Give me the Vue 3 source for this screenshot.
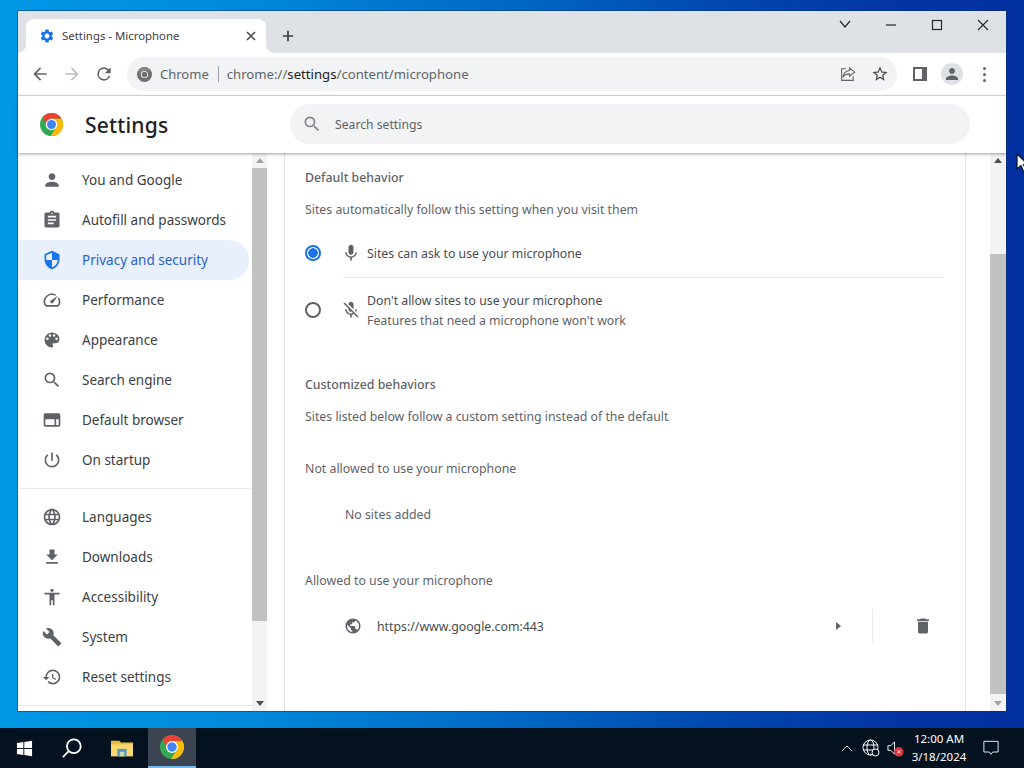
<template>
  <div class="screen">
    <div class="desktop">
      <div class="window">
        <div class="tabstrip">
          <div class="tab">
            <svg class="fav" viewBox="0 0 24 24"><path :d="icons.gear" /></svg>
            <span class="tab-title">Settings - Microphone</span>
            <svg class="tab-close" viewBox="0 0 12 12"><path d="M2 2l8 8M10 2l-8 8" /></svg>
          </div>
          <svg class="new-tab" viewBox="0 0 14 14"><path d="M7 1v12M1 7h12" /></svg>
          <div class="win-controls">
            <svg class="ctl" viewBox="0 0 46 28"><path d="M18 10l5 6 5-6" /></svg>
            <svg class="ctl" viewBox="0 0 46 28"><path d="M18 14h10" /></svg>
            <svg class="ctl" viewBox="0 0 46 28"><rect x="18.5" y="9.5" width="9" height="9" /></svg>
            <svg class="ctl" viewBox="0 0 46 28"><path d="M18 9l10 10M28 9l-10 10" /></svg>
          </div>
        </div>

        <div class="toolbar">
          <svg class="tb-btn" viewBox="0 0 24 24"><path d="M20 11H7.8l5.6-5.6L12 4l-8 8 8 8 1.4-1.4L7.8 13H20z" /></svg>
          <svg class="tb-btn faded" viewBox="0 0 24 24"><path d="M4 11h12.2l-5.6-5.6L12 4l8 8-8 8-1.4-1.4 5.6-5.6H4z" /></svg>
          <svg class="tb-btn" viewBox="0 0 24 24"><path d="M17.65 6.35A7.96 7.96 0 0 0 12 4a8 8 0 1 0 7.73 10h-2.08A6 6 0 1 1 12 6c1.66 0 3.14.69 4.22 1.78L13 11h7V4l-2.35 2.35z" /></svg>
          <div class="omnibox">
            <svg class="chip-logo" viewBox="0 0 48 48">
              <circle cx="24" cy="24" r="24" fill="#6e7174" />
              <path d="M6.3 7.8A24 24 0 0 1 44.8 12H24L14 30z" fill="#85888b" />
              <circle cx="24" cy="24" r="11.5" fill="#f1f3f4" />
              <circle cx="24" cy="24" r="8.5" fill="#6e7174" />
            </svg>
            <span class="chip">Chrome</span>
            <span class="chip-sep"></span>
            <span class="url">chrome://<b>settings</b>/content/microphone</span>
            <svg class="omni-icon share" viewBox="0 0 24 24">
              <path d="M14 4l7 5.5-7 5.5v-3.2c-4.2 0-7 1.4-9 4.7.6-4.8 3.4-8.6 9-9.3z" />
              <path d="M9 5H3.500v15.500H19V15" />
            </svg>
            <svg class="omni-icon star" viewBox="0 0 24 24"><path d="M22 9.240l-7.190-.62L12 2 9.190 8.630 2 9.240l5.460 4.730L5.820 21 12 17.270 18.180 21l-1.630-7.030L22 9.240zM12 15.400l-3.760 2.270 1-4.280-3.320-2.880 4.380-.38L12 6.100l1.710 4.040 4.380.38-3.320 2.880 1 4.280L12 15.400z" /></svg>
          </div>
          <div class="panel-btn"><span></span></div>
          <div class="avatar">
            <svg viewBox="0 0 24 24"><path :d="icons.person" /></svg>
          </div>
          <div class="dots"><i></i><i></i><i></i></div>
        </div>

        <header class="settings-head">
          <svg class="head-logo" viewBox="0 0 48 48">
            <circle cx="24" cy="24" r="24" fill="#34a853" />
            <path d="M6.300 7.800A24 24 0 0 1 44.800 12H24L14 30z" fill="#ea4335" />
            <path d="M44.800 12A24 24 0 0 1 22 47.900L34 30 24 12z" fill="#fbbc04" />
            <circle cx="24" cy="24" r="12" fill="#fff" />
            <circle cx="24" cy="24" r="9.500" fill="#4285f4" />
          </svg>
          <h1 class="head-title">Settings</h1>
          <div class="search">
            <svg viewBox="0 0 24 24"><path :d="icons.search" /></svg>
            <span>Search settings</span>
          </div>
        </header>

        <div class="body">
          <nav class="nav">
            <template v-for="group in navGroups" :key="group[0].label">
              <a v-for="item in group" :key="item.label" class="nav-item" :class="{ active: item.active }">
                <svg viewBox="0 0 24 24"><path :d="item.icon" fill-rule="evenodd" /></svg>
                <span>{{ item.label }}</span>
              </a>
              <div class="nav-sep"></div>
            </template>
          </nav>
          <div class="scrollbar small">
            <i class="arrow up"></i>
            <div class="thumb"></div>
            <i class="arrow down"></i>
          </div>

          <main class="card">
            <h2 class="heading">Default behavior</h2>
            <p class="sub">Sites automatically follow this setting when you visit them</p>

            <div class="radio-row first">
              <span class="radio on"></span>
              <svg class="radio-icon" viewBox="0 0 24 24"><path :d="icons.mic" /></svg>
              <div class="radio-text">Sites can ask to use your microphone</div>
            </div>
            <div class="radio-line"></div>
            <div class="radio-row second">
              <span class="radio"></span>
              <svg class="radio-icon" viewBox="0 0 24 24"><path :d="icons.micOff" /></svg>
              <div class="radio-text">
                Don't allow sites to use your microphone
                <div class="secondary">Features that need a microphone won't work</div>
              </div>
            </div>

            <h2 class="heading custom">Customized behaviors</h2>
            <p class="sub">Sites listed below follow a custom setting instead of the default</p>

            <h3 class="list-title">Not allowed to use your microphone</h3>
            <div class="no-sites">No sites added</div>

            <h3 class="list-title">Allowed to use your microphone</h3>
            <div class="site-row">
              <svg class="site-globe" viewBox="0 0 24 24"><path :d="icons.globe" /></svg>
              <span class="site-url">https://www.google.com:443</span>
              <i class="site-arrow"></i>
              <span class="site-sep"></span>
              <svg class="site-trash" viewBox="0 0 24 24"><path :d="icons.trash" /></svg>
            </div>
          </main>

          <div class="scrollbar big">
            <i class="arrow up"></i>
            <div class="thumb"></div>
            <i class="arrow down"></i>
          </div>
        </div>
      </div>

      <svg class="cursor" viewBox="0 0 12 20">
        <path d="M1 1v15l4-3.500 2.500 6 2.500-1-2.500-6H12z" fill="#fff" stroke="#0a1420" stroke-width="1.200" />
      </svg>
    </div>

    <footer class="taskbar">
      <div class="task start">
        <svg viewBox="0 0 18 18"><path d="M1 3.200l6.800-1v6.300H1zM8.800 2l8.200-1.200v7.700H8.800zM1 9.500h6.800v6.300l-6.800-1zM8.800 9.500H17v7.700L8.800 16z" fill="#fff" /></svg>
      </div>
      <div class="task">
        <svg class="tb-search" viewBox="0 0 24 24"><circle cx="14" cy="10" r="7.500" /><path d="M8.500 15.500L2 22" /></svg>
      </div>
      <div class="task">
        <svg viewBox="0 0 24 20">
          <path d="M0 2h9l2 2h13v15H0z" fill="#e8b93e" />
          <path d="M0 6h24v13H0z" fill="#f9d870" />
          <path d="M7 11h10v8H7z" fill="#4f93c4" />
          <path d="M9.500 14h5v5h-5z" fill="#c9d9a8" />
        </svg>
      </div>
      <div class="task current">
        <svg viewBox="0 0 48 48">
          <circle cx="24" cy="24" r="24" fill="#34a853" />
          <path d="M6.300 7.800A24 24 0 0 1 44.800 12H24L14 30z" fill="#ea4335" />
          <path d="M44.800 12A24 24 0 0 1 22 47.900L34 30 24 12z" fill="#fbbc04" />
          <circle cx="24" cy="24" r="12" fill="#fff" />
          <circle cx="24" cy="24" r="9.500" fill="#4285f4" />
        </svg>
      </div>

      <div class="tray">
        <svg class="tray-up" viewBox="0 0 14 8"><path d="M1 7l6-6 6 6" /></svg>
        <svg class="tray-globe" viewBox="0 0 18 18">
          <circle cx="8.500" cy="8.500" r="7.500" />
          <ellipse cx="8.500" cy="8.500" rx="3.500" ry="7.500" />
          <path d="M1 6h15M1 11h15" />
          <circle class="badge" cx="13.500" cy="13.500" r="3.500" />
        </svg>
        <svg class="tray-sound" viewBox="0 0 18 18">
          <path d="M1 6h3l4-4v13l-4-4H1z" />
          <circle cx="12.500" cy="12.500" r="5" fill="#d9363e" stroke="none" />
          <path d="M10.800 10.800l3.400 3.400M14.200 10.800l-3.400 3.400" />
        </svg>
        <div class="clock">
          <div>12:00 AM</div>
          <div>3/18/2024</div>
        </div>
        <svg class="tray-note" viewBox="0 0 18 17"><path d="M1 1h16v12h-6l-2 2.500L7 13H1z" /></svg>
      </div>
    </footer>
  </div>
</template>

<script setup>
const icons = {
  gear: "M19.14 12.94c.04-.3.06-.61.06-.94 0-.32-.02-.64-.07-.94l2.03-1.58a.49.49 0 0 0 .12-.61l-1.92-3.32a.488.488 0 0 0-.59-.22l-2.39.96c-.5-.38-1.03-.7-1.62-.94l-.36-2.54a.484.484 0 0 0-.48-.41h-3.84c-.24 0-.43.17-.47.41l-.36 2.54c-.59.24-1.13.57-1.62.94l-2.39-.96c-.22-.08-.47 0-.59.22L2.74 8.87c-.12.21-.08.47.12.61l2.03 1.58c-.05.3-.09.63-.09.94s.02.64.07.94l-2.03 1.58a.49.49 0 0 0-.12.61l1.92 3.32c.12.22.37.29.59.22l2.39-.96c.5.38 1.03.7 1.62.94l.36 2.54c.05.24.24.41.48.41h3.84c.24 0 .44-.17.47-.41l.36-2.54c.59-.24 1.13-.56 1.62-.94l2.39.96c.22.08.47 0 .59-.22l1.92-3.32c.12-.22.07-.47-.12-.61l-2.01-1.58zM12 15.600c-1.98 0-3.6-1.62-3.6-3.6s1.62-3.6 3.6-3.6 3.6 1.62 3.6 3.6-1.62 3.6-3.6 3.6z",
  person: "M12 12c2.210 0 4-1.790 4-4s-1.790-4-4-4-4 1.790-4 4 1.790 4 4 4zm0 2c-2.670 0-8 1.340-8 4v2h16v-2c0-2.660-5.330-4-8-4z",
  search: "M15.500 14h-.79l-.28-.27A6.471 6.471 0 0 0 16 9.500 6.500 6.500 0 1 0 9.500 16c1.610 0 3.090-.59 4.230-1.570l.27.28v.79l5 4.990L20.490 19l-4.990-5zm-6 0C7.010 14 5 11.990 5 9.500S7.010 5 9.500 5 14 7.010 14 9.500 11.990 14 9.500 14z",
  mic: "M12 14c1.660 0 3-1.340 3-3V5c0-1.660-1.340-3-3-3S9 3.340 9 5v6c0 1.660 1.340 3 3 3zm5.300-3c0 3-2.540 5.100-5.300 5.100S6.700 14 6.700 11H5c0 3.410 2.720 6.230 6 6.720V21h2v-3.280c3.280-.48 6-3.300 6-6.720h-1.700z",
  micOff: "M19 11h-1.700c0 .74-.16 1.430-.43 2.050l1.230 1.230c.56-.98.9-2.090.9-3.280zm-4.020.17c0-.06.02-.11.02-.17V5c0-1.660-1.340-3-3-3S9 3.340 9 5v.18l5.980 5.990zM4.270 3L3 4.270l6.010 6.010V11c0 1.660 1.330 3 2.990 3 .22 0 .44-.03.65-.08l1.660 1.660c-.71.33-1.500.52-2.310.52-2.760 0-5.300-2.100-5.300-5.100H5c0 3.410 2.720 6.230 6 6.720V21h2v-3.280c.91-.13 1.770-.45 2.540-.9L19.730 21 21 19.730 4.270 3z",
  globe: "M12 2C6.480 2 2 6.480 2 12s4.480 10 10 10 10-4.480 10-10S17.520 2 12 2zm-1 17.930c-3.950-.49-7-3.850-7-7.930 0-.62.08-1.210.21-1.790L9 15v1c0 1.100.9 2 2 2v1.930zm6.900-2.540c-.26-.81-1-1.390-1.900-1.390h-1v-3c0-.55-.45-1-1-1H8v-2h2c.55 0 1-.45 1-1V7h2c1.100 0 2-.9 2-2v-.41c2.930 1.190 5 4.060 5 7.410 0 2.080-.8 3.970-2.100 5.390z",
  trash: "M6 19c0 1.100.9 2 2 2h8c1.100 0 2-.9 2-2V7H6v12zM19 4h-3.500l-1-1h-5l-1 1H5v2h14V4z",
}

const navGroups = [
  [
    { label: "You and Google", icon: icons.person },
    { label: "Autofill and passwords", icon: "M19 3h-4.180C14.400 1.840 13.300 1 12 1c-1.300 0-2.400.84-2.820 2H5c-1.100 0-2 .9-2 2v14c0 1.100.9 2 2 2h14c1.100 0 2-.9 2-2V5c0-1.100-.9-2-2-2zm-7 0c.55 0 1 .45 1 1s-.45 1-1 1-1-.45-1-1 .45-1 1-1zm2 14H7v-2h7v2zm3-4H7v-2h10v2zm0-4H7V7h10v2z" },
    { label: "Privacy and security", active: true, icon: "M12 1L3 5v6c0 5.550 3.840 10.740 9 12 5.160-1.260 9-6.450 9-12V5l-9-4zm0 10.990h7c-.53 4.120-3.280 7.790-7 8.940V12H5V6.300l7-3.110v8.800z" },
    { label: "Performance", icon: "M20.380 8.570l-1.230 1.850a8 8 0 0 1-.22 7.580H5.070A8 8 0 0 1 15.580 6.850l1.850-1.230A10 10 0 0 0 3.350 19a2 2 0 0 0 1.720 1h13.850a2 2 0 0 0 1.740-1 10 10 0 0 0-.27-10.440zm-9.790 6.840a2 2 0 0 0 2.830 0l5.660-8.490-8.490 5.660a2 2 0 0 0 0 2.830z" },
    { label: "Appearance", icon: "M12 3a9 9 0 0 0 0 18c.83 0 1.500-.67 1.500-1.500 0-.39-.15-.74-.39-1.010-.23-.26-.38-.61-.38-.99 0-.83.67-1.500 1.500-1.500H16c2.760 0 5-2.240 5-5 0-4.420-4.030-8-9-8zm-5.500 9a1.500 1.500 0 1 1 0-3 1.500 1.500 0 0 1 0 3zm3-4a1.500 1.500 0 1 1 0-3 1.500 1.500 0 0 1 0 3zm5 0a1.500 1.500 0 1 1 0-3 1.500 1.500 0 0 1 0 3zm3 4a1.500 1.500 0 1 1 0-3 1.500 1.500 0 0 1 0 3z" },
    { label: "Search engine", icon: icons.search },
    { label: "Default browser", icon: "M4 4h16a2 2 0 0 1 2 2v12a2 2 0 0 1-2 2H4a2 2 0 0 1-2-2V6a2 2 0 0 1 2-2zm0 7v7h11v-7H4zm13 0v7h3v-7h-3z" },
    { label: "On startup", icon: "M13 3h-2v10h2V3zm4.830 2.170l-1.420 1.420A6.920 6.920 0 0 1 19 12c0 3.870-3.130 7-7 7A6.995 6.995 0 0 1 7.580 6.580L6.170 5.170A8.932 8.932 0 0 0 3 12a9 9 0 0 0 18 0c0-2.740-1.230-5.180-3.170-6.830z" },
  ],
  [
    { label: "Languages", icon: "M11.990 2C6.470 2 2 6.480 2 12s4.470 10 9.990 10C17.520 22 22 17.520 22 12S17.520 2 11.990 2zm6.930 6h-2.950a15.650 15.650 0 0 0-1.380-3.560A8.030 8.030 0 0 1 18.920 8zM12 4.040c.83 1.200 1.480 2.530 1.910 3.960h-3.820c.43-1.430 1.080-2.760 1.910-3.960zM4.260 14C4.100 13.360 4 12.690 4 12s.1-1.360.26-2h3.380c-.08.66-.14 1.320-.14 2s.06 1.340.14 2H4.260zm.82 2h2.950c.32 1.250.78 2.450 1.380 3.560A7.987 7.987 0 0 1 5.080 16zm2.950-8H5.080a7.987 7.987 0 0 1 4.330-3.560A15.650 15.650 0 0 0 8.030 8zM12 19.960c-.83-1.200-1.480-2.530-1.910-3.960h3.820c-.43 1.430-1.080 2.760-1.910 3.960zM14.340 14H9.660c-.09-.66-.16-1.320-.16-2s.07-1.350.16-2h4.680c.09.65.16 1.320.16 2s-.07 1.340-.16 2zm.25 5.560c.6-1.110 1.060-2.310 1.380-3.560h2.950a8.030 8.030 0 0 1-4.330 3.560zM16.360 14c.08-.66.14-1.320.14-2s-.06-1.340-.14-2h3.380c.16.64.26 1.310.26 2s-.1 1.360-.26 2h-3.380z" },
    { label: "Downloads", icon: "M19 9h-4V3H9v6H5l7 7 7-7zM5 18v2h14v-2H5z" },
    { label: "Accessibility", icon: "M12 2c1.100 0 2 .9 2 2s-.9 2-2 2-2-.9-2-2 .9-2 2-2zm9 7h-6v13h-2v-6h-2v6H9V9H3V7h18v2z" },
    { label: "System", icon: "M22.700 19l-9.100-9.100c.9-2.300.4-5-1.500-6.900-2-2-5-2.400-7.400-1.300L9 6 6 9 1.600 4.700C.4 7.100.9 10.100 2.900 12.100c1.900 1.900 4.600 2.400 6.900 1.500l9.100 9.100c.4.4 1 .4 1.400 0l2.300-2.300c.5-.4.5-1.100.1-1.400z" },
    { label: "Reset settings", icon: "M13 3a9 9 0 0 0-9 9H1l3.890 3.890.07.14L9 12H6c0-3.870 3.130-7 7-7s7 3.130 7 7-3.130 7-7 7c-1.930 0-3.680-.79-4.940-2.060l-1.420 1.420A8.954 8.954 0 0 0 13 21a9 9 0 0 0 0-18zm-1 5v5l4.280 2.540.72-1.210-3.500-2.080V8H12z" },
  ],
]
</script>

<style>
html,
body {
  margin: 0;
  overflow: hidden;
}
</style>

<style scoped>
.screen {
  width: 1024px;
  height: 768px;
  display: flex;
  flex-direction: column;
  overflow: hidden;
  font-family: "Noto Sans", "Open Sans", sans-serif;
  font-size: 13px;
  color: #202124;
}

.desktop {
  position: relative;
  height: 728px;
  padding: 11px 18px 0;
  box-sizing: border-box;
  background: linear-gradient(90deg, #0098e6 0%, #0088da 25%, #0068c4 50%, #0048b0 70%, #0434a4 88%, #0230a0 100%);
}

.window {
  width: 988px;
  height: 700px;
  display: flex;
  flex-direction: column;
  background: #fff;
  box-shadow: 0 0 0 1px rgba(10, 50, 100, 0.5);
}

.tabstrip {
  height: 42px;
  flex: none;
  display: flex;
  background: #dee1e6;
}

.tab {
  position: relative;
  margin: 8px 0 0 8px;
  width: 240px;
  height: 34px;
  display: flex;
  align-items: center;
  box-sizing: border-box;
  padding: 0 9px 0 13px;
  background: #fff;
  border-radius: 8px 8px 0 0;
}

.tab::before,
.tab::after {
  content: "";
  position: absolute;
  bottom: 0;
  width: 8px;
  height: 8px;
}

.tab::before {
  left: -8px;
  background: radial-gradient(circle at 0 0, #dee1e6 7.5px, #fff 8px);
}

.tab::after {
  right: -8px;
  background: radial-gradient(circle at 100% 0, #dee1e6 7.5px, #fff 8px);
}

.fav {
  width: 16px;
  height: 16px;
  fill: #1a73e8;
}

.tab-title {
  flex: 1;
  margin: 0 0 2px 7px;
  font-size: 11.400px;
  color: #3c4043;
}

.tab-close {
  width: 12px;
  height: 12px;
  fill: none;
  stroke: #45484c;
  stroke-width: 1.6;
}

.new-tab {
  width: 12px;
  height: 12px;
  margin: 19px 0 0 16px;
  fill: none;
  stroke: #3c4043;
  stroke-width: 2;
}

.win-controls {
  margin-left: auto;
  display: flex;
  height: 28px;
}

.ctl {
  width: 46px;
  height: 28px;
  fill: none;
  stroke: #26282b;
  stroke-width: 1.200;
}

.toolbar {
  height: 42px;
  flex: none;
  display: flex;
  align-items: center;
  box-sizing: content-box;
  padding-left: 12px;
  border-bottom: 1px solid #dadce0;
}

.tb-btn {
  width: 20px;
  height: 20px;
  margin-right: 12px;
  fill: #5f6368;
}

.tb-btn.faded {
  fill: #bcc0c4;
}

.omnibox {
  width: 770px;
  height: 34px;
  margin-left: 1px;
  display: flex;
  align-items: center;
  box-sizing: border-box;
  padding-left: 10px;
  background: #f1f3f4;
  border-radius: 17px;
}

.chip-logo {
  width: 15px;
  height: 15px;
}

.chip {
  margin-left: 8px;
  color: #5f6368;
}

.chip-sep {
  width: 1px;
  height: 16px;
  margin: 0 8px 0 9px;
  background: #9aa0a6;
}

.url {
  font-size: 13.170px;
  color: #5f6368;
}

.url b {
  font-weight: 400;
  color: #202124;
}

.omni-icon {
  width: 18px;
  height: 18px;
}

.share {
  margin-left: auto;
  fill: none;
  stroke: #5f6368;
  stroke-width: 1.400;
}

.star {
  margin: 0 8px 0 14px;
  fill: #45484c;
}

.panel-btn {
  width: 14px;
  height: 14px;
  margin-left: 16px;
  box-sizing: border-box;
  border: 2px solid #5f6368;
  border-right-width: 5px;
  background: #fff;
}

.avatar {
  width: 22px;
  height: 22px;
  margin-left: 14px;
  display: flex;
  align-items: center;
  justify-content: center;
  background: #dee1e6;
  border-radius: 50%;
}

.avatar svg {
  width: 18px;
  height: 18px;
  fill: #5f6368;
}

.dots {
  margin-left: 20px;
  display: flex;
  flex-direction: column;
  gap: 3px;
}

.dots i {
  width: 3px;
  height: 3px;
  background: #5f6368;
  border-radius: 50%;
}

.settings-head {
  position: relative;
  z-index: 2;
  height: 57px;
  flex: none;
  display: flex;
  align-items: center;
  box-sizing: border-box;
  padding: 0 36px 1px 22px;
  background: #fff;
  box-shadow: 0 1px 3px rgba(60, 64, 67, 0.5);
}

.head-logo {
  width: 23px;
  height: 23px;
}

.head-title {
  width: 205px;
  margin: 2px 0 0 22px;
  font-size: 21px;
  font-weight: 500;
  letter-spacing: 0.2px;
}

.search {
  flex: 1;
  height: 40px;
  display: flex;
  align-items: center;
  box-sizing: border-box;
  padding-left: 12px;
  background: #f1f3f4;
  border-radius: 20px;
  color: #5f6368;
  font-size: 12.200px;
}

.search svg {
  width: 20px;
  height: 20px;
  fill: #80868b;
  margin-right: 13px;
}

.body {
  flex: 1;
  min-height: 0;
  display: flex;
  overflow: hidden;
}

.nav {
  width: 234px;
  flex: none;
  padding-top: 7px;
  box-sizing: border-box;
  font-size: 13.500px;
  color: #3c4043;
}

.nav-item {
  width: 231px;
  height: 40px;
  display: flex;
  align-items: center;
  box-sizing: border-box;
  padding-left: 24px;
  border-radius: 0 20px 20px 0;
}

.nav-item svg {
  width: 20px;
  height: 20px;
  margin-right: 20px;
  fill: #5f6368;
  flex: none;
}

.nav-item.active {
  background: #e8f0fe;
  color: #2a62c8;
}

.nav-item.active svg {
  fill: #1a73e8;
}

.nav-sep {
  margin: 8px 0;
  border-top: 1px solid #e8eaed;
}

.scrollbar {
  flex: none;
  display: flex;
  flex-direction: column;
  align-items: center;
  background: #f3f3f3;
  position: relative;
  box-sizing: border-box;
}

.scrollbar.small {
  width: 15px;
}

.scrollbar.big {
  width: 16px;
  margin-left: 24px;
}

.thumb {
  width: 100%;
  background: #c1c1c1;
}

.small .thumb {
  height: 453px;
  margin-top: 5px;
}

.big .thumb {
  height: 440px;
  margin-top: 91px;
}

.arrow {
  width: 0;
  height: 0;
  border-left: 4px solid transparent;
  border-right: 4px solid transparent;
}

.arrow.up {
  margin-top: 5px;
  border-bottom: 5px solid #505050;
}

.arrow.down {
  margin-top: auto;
  margin-bottom: 5px;
  border-top: 5px solid #505050;
}

.small .arrow.up,
.big .arrow.down {
  border-top-color: #a3a3a3;
  border-bottom-color: #a3a3a3;
}

.card {
  width: 682px;
  margin-left: 17px;
  box-sizing: border-box;
  flex: none;
  padding-left: 20px;
  border-left: 1px solid #e3e3e3;
  border-right: 1px solid #e3e3e3;
  color: #484b50;
  font-size: 12.300px;
}

.heading,
.list-title {
  height: 48px;
  margin: 0;
  font-size: 12.350px;
  line-height: 50px;
  color: #5f6368;
}

.heading {
  font-weight: 500;
}

.heading.custom {
  margin-top: 18px;
}

.list-title {
  margin-top: 20px;
  font-weight: 400;
}

.sub {
  height: 16px;
  margin: 0;
  line-height: 18px;
  color: #5f6368;
}

.radio-row {
  display: flex;
  align-items: center;
}

.radio-row.first {
  margin-top: 12px;
  height: 48px;
}

.radio-row.second {
  height: 64px;
}

.radio {
  width: 16px;
  height: 16px;
  box-sizing: border-box;
  border: 2px solid #5f6368;
  border-radius: 50%;
  flex: none;
}

.radio.on {
  border-color: #1a73e8;
  background: radial-gradient(circle, #1a73e8 4.500px, #fff 5px);
}

.radio-icon {
  width: 20px;
  height: 20px;
  margin: 0 6px 0 20px;
  fill: #5f6368;
  flex: none;
}

.radio-text {
  padding-top: 2px;
  line-height: 20px;
}

.secondary {
  color: #5f6368;
}

.radio-line {
  width: 601px;
  margin-left: 38px;
  border-top: 1px solid #e8eaed;
}

.no-sites {
  height: 44px;
  padding-left: 40px;
  line-height: 46px;
  color: #5f6368;
}

.site-row {
  height: 44px;
  display: flex;
  align-items: center;
}

.site-globe {
  width: 18px;
  height: 18px;
  margin-left: 39px;
  fill: #5f6368;
}

.site-url {
  margin-left: 15px;
}

.site-arrow {
  width: 0;
  height: 0;
  margin-left: auto;
  border-top: 4px solid transparent;
  border-bottom: 4px solid transparent;
  border-left: 5px solid #5f6368;
}

.site-sep {
  width: 1px;
  height: 34px;
  margin-left: 31px;
  background: #e8eaed;
}

.site-trash {
  width: 20px;
  height: 20px;
  margin: 0 32px 0 40px;
  fill: #5f6368;
}

.cursor {
  position: absolute;
  left: 1016px;
  top: 153px;
  width: 12px;
  height: 20px;
}

.taskbar {
  height: 40px;
  flex: none;
  display: flex;
  background: #04111f;
}

.task {
  width: 48px;
  height: 40px;
  display: flex;
  align-items: center;
  justify-content: center;
  box-sizing: border-box;
}

.task.start svg {
  width: 17px;
  height: 17px;
}

.task.start + .task {
  margin-right: 2px;
}

.task.current {
  margin-left: 2px;
  background: #3b4450;
  border-bottom: 2px solid #76b9ed;
}

.task svg {
  width: 22px;
  height: 22px;
}

.tb-search {
  fill: none;
  stroke: #fff;
  stroke-width: 2;
}

.task.current svg {
  width: 24px;
  height: 24px;
}

.tray {
  margin-left: auto;
  display: flex;
  align-items: center;
  color: #fff;
}

.tray svg {
  fill: none;
  stroke: #fff;
  stroke-width: 1;
}

.tray-up {
  width: 12px;
  height: 7px;
}

.tray-globe {
  width: 18px;
  height: 18px;
  margin-left: 9px;
}

.tray-globe .badge {
  fill: #04111f;
}

.tray-sound {
  width: 17px;
  height: 17px;
  margin-left: 7px;
}

.clock {
  width: 70px;
  text-align: center;
  font-size: 11.500px;
  line-height: 18px;
}

.tray-note {
  width: 16px;
  height: 16px;
  margin: 0 25px 0 9px;
}
</style>
